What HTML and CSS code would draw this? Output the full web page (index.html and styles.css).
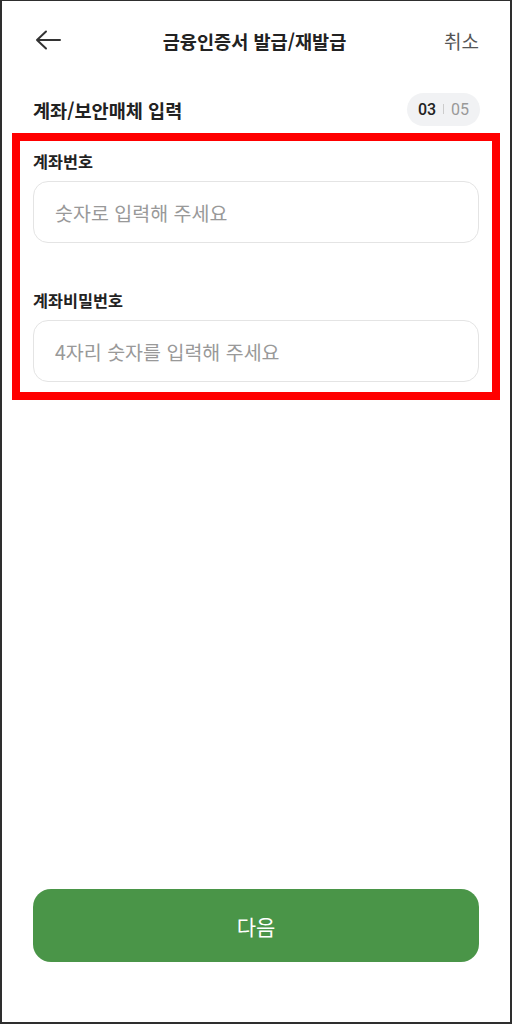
FILE: index.html
```html
<!DOCTYPE html>
<html lang="ko">
<head>
<meta charset="utf-8">
<link rel="stylesheet" href="styles.css">
</head>
<body>
<div class="frame">
  <header class="topbar">
    <button class="back" aria-label="뒤로">
      <svg width="26" height="20" viewBox="0 0 26 20"><path d="M25 10H2M11 1.5L2 10l9 8.5" fill="none" stroke="#333" stroke-width="2" stroke-linecap="round" stroke-linejoin="round"/></svg>
    </button>
    <h1 class="title">금융인증서 발급/재발급</h1>
    <span class="cancel">취소</span>
  </header>
  <div class="section-head">
    <h2 class="section-title">계좌/보안매체 입력</h2>
    <div class="step"><b>03</b><span class="sep"></span><span class="total">05</span></div>
  </div>
  <section class="form">
    <div class="field">
      <label class="label">계좌번호</label>
      <div class="input">숫자로 입력해 주세요</div>
    </div>
    <div class="field second">
      <label class="label">계좌비밀번호</label>
      <div class="input">4자리 숫자를 입력해 주세요</div>
    </div>
  </section>
  <div class="spacer"></div>
  <button class="next">다음</button>
</div>
</body>
</html>
```
FILE: styles.css
```css
* { box-sizing: border-box; }
html, body { margin: 0; padding: 0; }
body {
  font-family: "Noto Sans CJK KR", "Noto Sans", sans-serif;
  color: #222;
  background: #fff;
}
.frame {
  width: 512px;
  height: 1024px;
  border: 2px solid #2e2e2e;
  border-top-width: 1px;
  border-bottom-width: 2px;
  padding: 0 31px 60px 31px;
  display: flex;
  flex-direction: column;
}
.topbar {
  height: 78px;
  display: flex;
  align-items: center;
  justify-content: space-between;
}
.back {
  border: 0;
  background: none;
  padding: 0;
  margin-left: 2px;
  width: 26px;
  height: 20px;
  display: flex;
}
.title {
  margin: 0;
  font-size: 18.6px;
  font-weight: 700;
  color: #222;
  position: relative;
  left: 2px;
}
.cancel {
  font-size: 19px;
  color: #555;
}
.section-head {
  height: 47px;
  display: flex;
  align-items: center;
  justify-content: space-between;
  padding-top: 13px;
}
.section-title {
  margin: 0;
  font-size: 18.6px;
  font-weight: 700;
  color: #222;
}
.step {
  width: 73px;
  height: 33px;
  border-radius: 17px;
  background: #f1f2f4;
  display: flex;
  align-items: center;
  justify-content: center;
  font-family: "Roboto", "Noto Sans", sans-serif;
  font-size: 16px;
  gap: 7px;
  margin-right: -1px;
}
.step b { font-weight: 500; color: #222; }
.step .sep { width: 1px; height: 10px; background: #ccc; }
.step .total { color: #999; }
.form {
  margin: 7px -21px 0 -21px;
  border: 8px solid #ff0000;
  padding: 9px 13px 10px 13px;
}
.field { display: flex; flex-direction: column; }
.field.second { margin-top: 46px; }
.label {
  font-size: 16.3px;
  font-weight: 700;
  line-height: 22px;
  color: #222;
  margin-bottom: 9px;
}
.input {
  height: 62px;
  border: 1.5px solid #e4e4e4;
  border-radius: 15px;
  padding-left: 21px;
  display: flex;
  align-items: center;
  font-size: 19.5px;
  color: #999;
}
.spacer { flex: 1; }
.next {
  height: 73px;
  border: 0;
  border-radius: 18px;
  background: #4a9548;
  color: #fff;
  font-family: "Noto Sans CJK KR", sans-serif;
  font-size: 21px;
  margin: 0;
  width: 446px;
}
```
